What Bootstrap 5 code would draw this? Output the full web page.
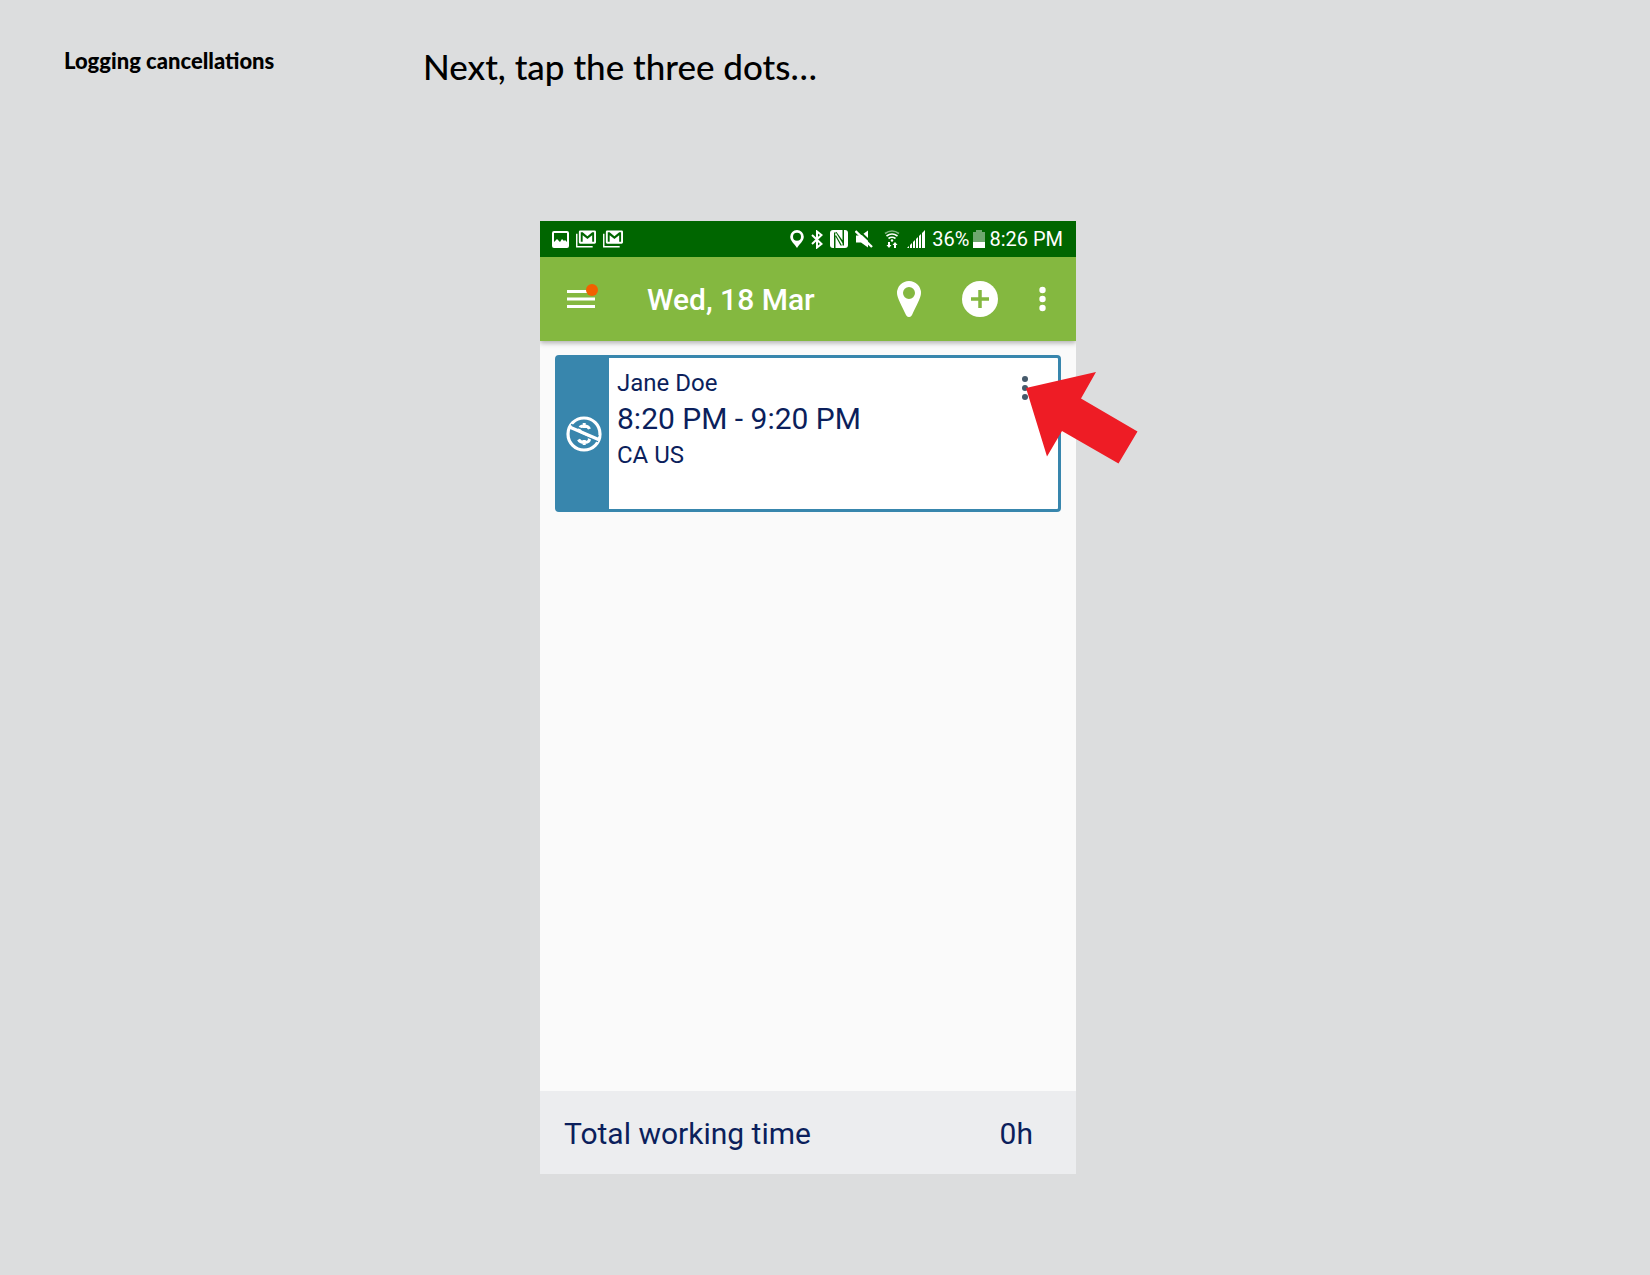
<!DOCTYPE html>
<html lang="en">
<head>
<meta charset="utf-8">
<meta name="viewport" content="width=device-width, initial-scale=1">
<title>Logging cancellations</title>
<link href="https://cdn.jsdelivr.net/npm/bootstrap@5.3.0/dist/css/bootstrap.min.css" rel="stylesheet">
<style>
  body { background: #dcddde; color: #000; font-family: Roboto, "Liberation Sans", sans-serif; }
  svg { display: block; flex: none; }
  .guide-head { padding: 45px 64px 0; margin-bottom: 134px; font-family: Lato, "Liberation Sans", sans-serif; }
  .guide-topic { width: 359px; font-size: 22px; line-height: 32px; font-weight: 900; }
  .guide-step { font-size: 35px; line-height: 42px; font-weight: 500; }
  .stage { padding-right: 34px; }
  .phone { max-width: 536px; background: #fafafa; color: #0b1f5c; }
  .statusbar { background: #006600; color: #fff; height: 36px; padding: 0 13px 0 12px; font-size: 20px; line-height: 36px; }
  .status-group { gap: 7px; }
  .status-power { gap: 4px; }
  .appbar { background: #84b840; color: #fff; height: 84px; padding: 0 30px 0 27px; box-shadow: 0 2px 5px rgba(0,0,0,.3); clip-path: inset(0 0 -8px 0); }
  .appbar-title { font-size: 30px; line-height: 36px; font-weight: 500; margin-left: 49px; padding-top: 2px; }
  .appbar-actions { gap: 41px; }
  .plain-btn { background: none; border: 0; padding: 0; color: inherit; }
  .phone-body { min-height: 750px; padding: 14px 15px; }
  .visit { border: 3px solid #3886ad; border-radius: 4px; background: #fff; min-height: 157px; }
  .visit-side { width: 51px; background: #3886ad; color: #fff; }
  .visit-text { padding: 8px; font-size: 24px; line-height: 34px; }
  .visit-time { font-size: 30px; line-height: 38px; }
  .visit-menu { color: #465a6b; margin: 18px 30px 0 0; }
  .pointer { right: -80px; top: 14px; pointer-events: none; }
  .total { background: #ecedef; height: 83px; padding: 2px 43px 0 24px; font-size: 30px; }
</style>
</head>
<body>
<header class="guide-head d-flex">
  <h1 class="guide-topic mb-0 flex-shrink-0">Logging cancellations</h1>
  <p class="guide-step mb-0">Next, tap the three dots…</p>
</header>

<main class="stage d-flex justify-content-center">
  <section class="phone w-100">
    <div class="statusbar d-flex align-items-center justify-content-between">
      <div class="status-group d-flex align-items-center">
        <svg width="17" height="17" viewBox="0 0 17 17"><path fill="#fff" fill-rule="evenodd" d="M2 0h13a2 2 0 0 1 2 2v13a2 2 0 0 1-2 2H2a2 2 0 0 1-2-2V2a2 2 0 0 1 2-2zM2 2v9l3-3 3 3 2-3 2 2 1-1 2 2V2z"/></svg>
        <svg width="20" height="18" viewBox="0 0 21 18"><path fill="none" stroke="#fff" stroke-width="1.500" d="M.8 3.500V17.200H17.500"/><path fill="#fff" fill-rule="evenodd" d="M4.500 0h15a1.500 1.500 0 0 1 1.500 1.500v11a1.500 1.500 0 0 1-1.500 1.500h-15a1.500 1.500 0 0 1-1.500-1.500v-11A1.500 1.500 0 0 1 4.500 0zM5 2v10h2V5l5 4 5-4v7h2V2h-2l-5 4-5-4z"/></svg>
        <svg width="20" height="18" viewBox="0 0 21 18"><path fill="none" stroke="#fff" stroke-width="1.500" d="M.8 3.500V17.200H17.500"/><path fill="#fff" fill-rule="evenodd" d="M4.500 0h15a1.500 1.500 0 0 1 1.500 1.500v11a1.500 1.500 0 0 1-1.500 1.500h-15a1.500 1.500 0 0 1-1.500-1.500v-11A1.500 1.500 0 0 1 4.500 0zM5 2v10h2V5l5 4 5-4v7h2V2h-2l-5 4-5-4z"/></svg>
      </div>
      <div class="status-group d-flex align-items-center">
        <svg width="14" height="18" viewBox="0 0 14 18"><path fill="#fff" fill-rule="evenodd" d="M7 0a6.800 6.800 0 0 1 6.800 6.800C13.800 11 9.500 14 7 18 4.500 14 .2 11 .2 6.800A6.800 6.800 0 0 1 7 0zm0 2.800a4 4 0 1 0 0 8 4 4 0 0 0 0-8z"/></svg>
        <svg width="12" height="19" viewBox="0 0 12 19"><path fill="none" stroke="#fff" stroke-width="2" d="M1 5l9.500 9L6 17.500V1.500l4.500 3.500L1 14"/></svg>
        <svg width="18" height="18" viewBox="0 0 18 18"><rect width="18" height="18" rx="3" fill="#fff"/><path fill="#006600" d="M4 2.500h1.500V18H4zM12.500 0H14v15.500h-1.500zM5 5.500l5.500 10H12L5 3.500zM6.500 2L13 11v3L5.500 2z"/></svg>
        <svg width="18" height="18" viewBox="0 0 18 18"><path fill="#fff" d="M1 5.500h5l7-5v17l-7-5H1z"/><path stroke="#006600" stroke-width="2" d="M3 0l16 15"/><path stroke="#fff" stroke-width="2.400" d="M.5 1l16.500 16"/></svg>
        <svg class="ms-1" width="16" height="18" viewBox="0 0 16 18"><g fill="none" stroke="#fff" stroke-width="1.600"><path opacity=".5" d="M1 3.500q7-5 14 0"/><path d="M2.500 6q5.500-4 11 0M4.500 8.500q3.500-2.500 7 0"/></g><circle cx="8" cy="10.500" r="1.200" fill="#fff"/><path fill="#fff" d="M4 12h2v3h1.500L5 18l-2.500-3H4zM10 18h2v-3h1.500L11 12l-2.500 3H10z"/></svg>
        <svg width="18" height="18" viewBox="0 0 18 18"><path fill="#fff" d="M0 18l2-2v2zM3 18v-3l2-2v5zM6 18v-6l2-2v8zM9 18V9l2-2v11zM12 18V6l2-2v14zM15 18V3l3-3v18z"/></svg>
        <div class="status-power d-flex align-items-center">
          <span>36%</span>
          <svg width="12" height="18" viewBox="0 0 12 18"><path fill="#6fa86f" d="M3 0h6v2h3v10H0V2h3z"/><path fill="#fff" d="M0 12h12v6H0z"/></svg>
          <span>8:26 PM</span>
        </div>
      </div>
    </div>

    <nav class="appbar d-flex align-items-center position-relative" aria-label="Day">
      <button class="plain-btn" type="button" aria-label="Menu">
        <svg width="31" height="32" viewBox="0 0 31 32"><path stroke="#fff" stroke-width="3" d="M0 8.500h28M0 16h28M0 23.500h28"/><circle cx="25" cy="7" r="6" fill="#f26000"/></svg>
      </button>
      <h2 class="appbar-title mb-0 me-auto">Wed, 18 Mar</h2>
      <div class="appbar-actions d-flex align-items-center">
        <button class="plain-btn" type="button" aria-label="Location">
          <svg width="24" height="36" viewBox="0 0 24 36"><path fill="#fff" fill-rule="evenodd" d="M12 0a12 12 0 0 1 12 12c0 5-5 13-9 22-1.500 2.700-4.500 2.700-6 0C5 25 0 17 0 12A12 12 0 0 1 12 0zm0 6a6 6 0 1 0 0 12 6 6 0 0 0 0-12z"/></svg>
        </button>
        <button class="plain-btn" type="button" aria-label="Add">
          <svg width="36" height="36" viewBox="0 0 36 36"><circle cx="18" cy="18" r="18" fill="#fff"/><path stroke="#84b840" stroke-width="3.500" d="M9 18h18M18 9v18"/></svg>
        </button>
        <button class="plain-btn" type="button" aria-label="More">
          <svg width="7" height="26" viewBox="0 0 7 26" fill="#fff"><circle cx="3.500" cy="4" r="3.200"/><circle cx="3.500" cy="13" r="3.200"/><circle cx="3.500" cy="22" r="3.200"/></svg>
        </button>
      </div>
    </nav>

    <div class="phone-body">
      <article class="visit d-flex position-relative">
        <div class="visit-side d-flex align-items-center justify-content-center">
          <svg width="36" height="36" viewBox="0 0 36 36" fill="none" stroke="#fff"><circle cx="18" cy="18" r="16" stroke-width="3.200"/><path stroke-width="3" d="M23.500 13c-1.500-4-10-4-10 .5 0 5 10 4 10 9.500 0 4.500-9 4.500-11 .5M18.200 7v5M18.200 24v5"/><path stroke="#3886ad" stroke-width="1.500" d="M4.500 14l27.500 11.500M5 8.500l27.500 11.500"/><path stroke-width="3.200" d="M3.500 11l29 12.500"/></svg>
        </div>
        <div class="visit-text me-auto">
          <div>Jane Doe</div>
          <div class="visit-time">8:20 PM - 9:20 PM</div>
          <div>CA US</div>
        </div>
        <button class="plain-btn visit-menu align-self-start" type="button" aria-label="Visit options">
          <svg width="6" height="24" viewBox="0 0 6 24" fill="currentColor"><circle cx="3" cy="3" r="3"/><circle cx="3" cy="12" r="3"/><circle cx="3" cy="21" r="3"/></svg>
        </button>
        <svg class="pointer position-absolute" width="112" height="92" viewBox="0 0 112 92" aria-hidden="true"><path fill="#ee1c25" d="M0 16L70 0 55 26.500 111.500 59.500 92.500 91.500 36 59 21 84.500z"/></svg>
      </article>
    </div>

    <footer class="total d-flex align-items-center justify-content-between">
      <span>Total working time</span>
      <span>0h</span>
    </footer>
  </section>
</main>
<script src="https://cdn.jsdelivr.net/npm/bootstrap@5.3.0/dist/js/bootstrap.bundle.min.js"></script>
</body>
</html>
